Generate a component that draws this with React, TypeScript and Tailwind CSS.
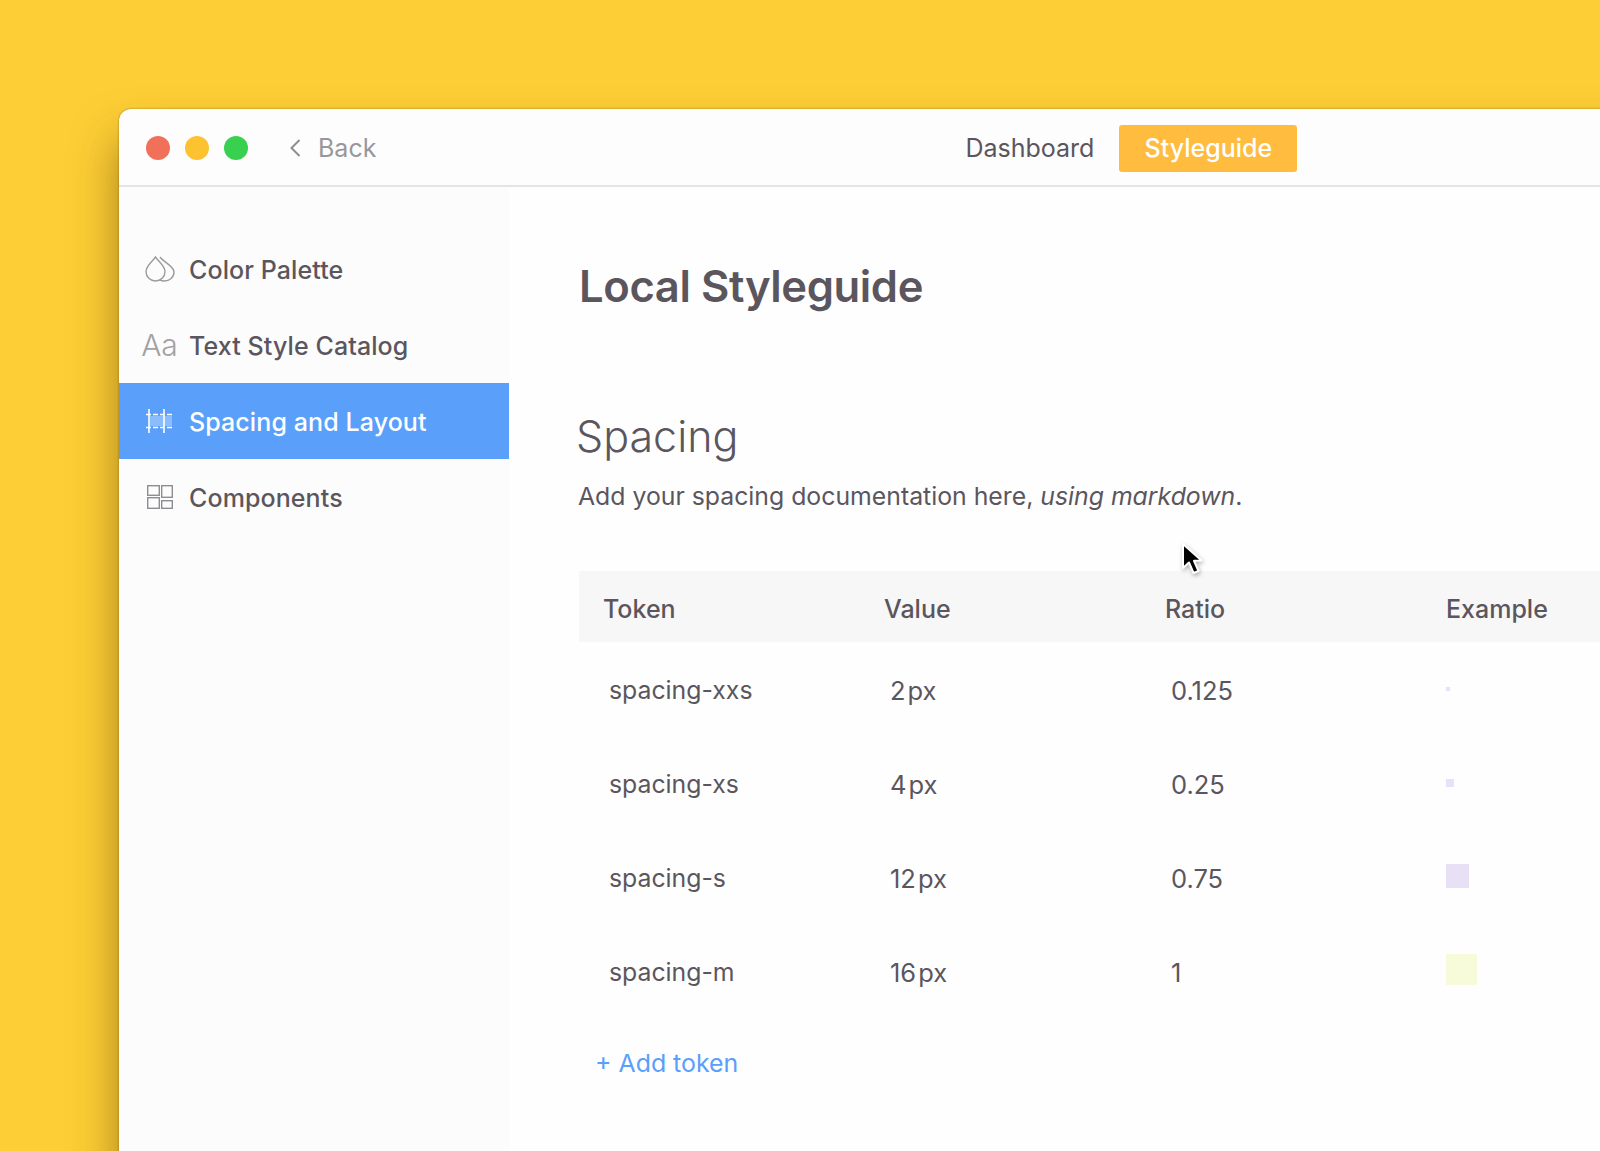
import React from 'react'

const tokens = [
  { name: 'spacing-xxs', num: '2', ratio: '0.125', swatch: 'h-[4px] w-[4px] bg-[#e9e2f6]' },
  { name: 'spacing-xs', num: '4', ratio: '0.25', swatch: 'h-[8px] w-[8px] bg-[#e9e2f6]' },
  { name: 'spacing-s', num: '12', ratio: '0.75', swatch: '-mt-[2px] h-[24px] w-[23px] bg-[#e8e1f5]' },
  { name: 'spacing-m', num: '16', ratio: '1', swatch: '-mt-[4px] h-[31px] w-[31px] bg-[#f8fbd9]' },
]

function Drops() {
  return (
    <svg width="30" height="26" viewBox="0 0 30 26" fill="none" stroke="#9c9a9d" strokeWidth="1.4">
      <path d="M10.500 1 C7 6 1 10 1 15.500 C1 21 5.300 25 10.500 25 C15.700 25 20 21 20 15.500 C20 10 14 6 10.500 1 Z" />
      <path d="M15 1 C19 6.500 29 10 29 16 C29 21.500 24.500 25 19.500 25 C18 25 16.500 24.700 15 24" />
    </svg>
  )
}

function Grid() {
  return (
    <svg width="26" height="24" viewBox="0 0 26 24" fill="none" stroke="#8f8d91" strokeWidth="1.4">
      <rect x="0.700" y="0.700" width="11.600" height="9.600" />
      <rect x="14.700" y="0.700" width="10.600" height="11.600" />
      <rect x="0.700" y="12.700" width="11.600" height="10.600" />
      <rect x="14.700" y="15.700" width="10.600" height="7.600" />
    </svg>
  )
}

function SpacingIcon() {
  return (
    <svg width="27" height="24" viewBox="0 0 27 24" fill="none" stroke="#ffffff">
      <rect x="4" y="7" width="22" height="10" fill="#ffffff" fillOpacity="0.3" stroke="none" />
      <path d="M0 5.500 H27 M0 18.500 H27" strokeWidth="1.300" strokeDasharray="5 2" />
      <path d="M3 0 V24 M18 0 V24" strokeWidth="1.600" />
    </svg>
  )
}

function Chevron() {
  return (
    <svg width="13" height="20" viewBox="0 0 13 20" fill="none" stroke="#8f8d91" strokeWidth="2">
      <path d="M10.500 2 L2.500 10 L10.500 18" />
    </svg>
  )
}

function Cursor() {
  return (
    <svg width="28" height="38" viewBox="0 0 28 38" className="absolute left-[1179px] top-[541px] drop-shadow-[1px_2px_2px_rgba(0,0,0,0.3)]">
      <path d="M4 3 L4 27 L10 21.500 L14.500 32 L19.500 30 L15 19.800 L22.500 19.500 Z" fill="#000000" stroke="#ffffff" strokeWidth="2" strokeLinejoin="round" />
    </svg>
  )
}

function NavItem({ icon, label, active }: { icon: React.ReactNode; label: string; active?: boolean }) {
  return (
    <div className={`flex h-[76px] items-center ${active ? 'bg-[#5a9ffa] text-white' : 'text-[#5b565e]'}`}>
      <div className="flex w-[70px] shrink-0 items-center justify-center pl-[11px]">{icon}</div>
      <span className="pt-[4px] text-[25px] font-medium tracking-[0.1px]">{label}</span>
    </div>
  )
}

export default function App() {
  return (
    <div className="relative h-[1151px] w-[1600px] overflow-hidden bg-[#fdce35] pl-[119px] pt-[109px] font-['Inter',sans-serif] text-[#5b565e]">
      <div className="h-[1100px] w-[1560px] rounded-tl-[12px] bg-[#fdfdfd] shadow-[0_30px_45px_rgba(80,50,0,0.5),0_0_2px_rgba(90,60,0,0.6)]">
        <header className="flex h-[78px] items-center border-b-2 border-[#e4e4e4] pl-[27px] pt-[2px]">
          <div className="flex items-center gap-[15px]">
            <span className="h-[24px] w-[24px] rounded-full bg-[#f0705a]" />
            <span className="h-[24px] w-[24px] rounded-full bg-[#fdc22f]" />
            <span className="h-[24px] w-[24px] rounded-full bg-[#3ad04f]" />
          </div>
          <div className="ml-[41px] flex items-center gap-[16px] text-[#9a979b]">
            <Chevron />
            <span className="pt-[2px] text-[25px]">Back</span>
          </div>
          <span className="ml-[589px] pt-[2px] text-[25px]">Dashboard</span>
          <span className="ml-[25px] flex h-[47px] w-[178px] items-center justify-center rounded-[3px] bg-[#ffbc3e] pt-[2px] text-[25px] font-medium text-white">
            Styleguide
          </span>
        </header>
        <div className="flex">
          <aside className="h-[1000px] w-[390px] shrink-0 bg-[#fcfcfc] pt-[44px]">
            <NavItem icon={<Drops />} label="Color Palette" />
            <NavItem icon={<span className="text-[30px] font-light text-[#a3a1a4]">Aa</span>} label="Text Style Catalog" />
            <NavItem icon={<SpacingIcon />} label="Spacing and Layout" active />
            <NavItem icon={<Grid />} label="Components" />
          </aside>
          <main className="flex-1 bg-[#fefefe] pl-[70px]">
            <h1 className="mt-[73px] text-[43.600px] font-semibold leading-[54px] tracking-[-0.4px]">Local Styleguide</h1>
            <h2 className="-ml-[3px] mt-[95px] text-[43px] font-light leading-[54px]">Spacing</h2>
            <p className="-ml-[1px] mt-[15px] text-[24.800px] leading-[36px]">
              Add your spacing documentation here, <em>using markdown</em>.
            </p>
            <div className="mt-[57px] grid h-[71px] grid-cols-[281px_281px_281px_1fr] items-center bg-[#f7f7f7] pl-[24px] pt-[7px] text-[25px] font-medium">
              <span>Token</span>
              <span>Value</span>
              <span>Ratio</span>
              <span>Example</span>
            </div>
            {tokens.map((t) => (
              <div key={t.name} className="grid h-[94px] grid-cols-[281px_281px_281px_1fr] items-center pl-[24px] text-[25.500px]">
                <span className="pl-[6px] pt-[4px] text-[24.800px]">{t.name}</span>
                <span className="pl-[6px] pt-[4px]">
                  {t.num}
                  <span className="ml-[2px]">px</span>
                </span>
                <span className="pl-[6px] pt-[4px]">{t.ratio}</span>
                <span className={t.swatch} />
              </div>
            ))}
            <div className="mt-[27px] pl-[16px] text-[24.900px] leading-[36px] text-[#5a9ffa]">+ Add token</div>
          </main>
        </div>
      </div>
      <Cursor />
    </div>
  )
}
